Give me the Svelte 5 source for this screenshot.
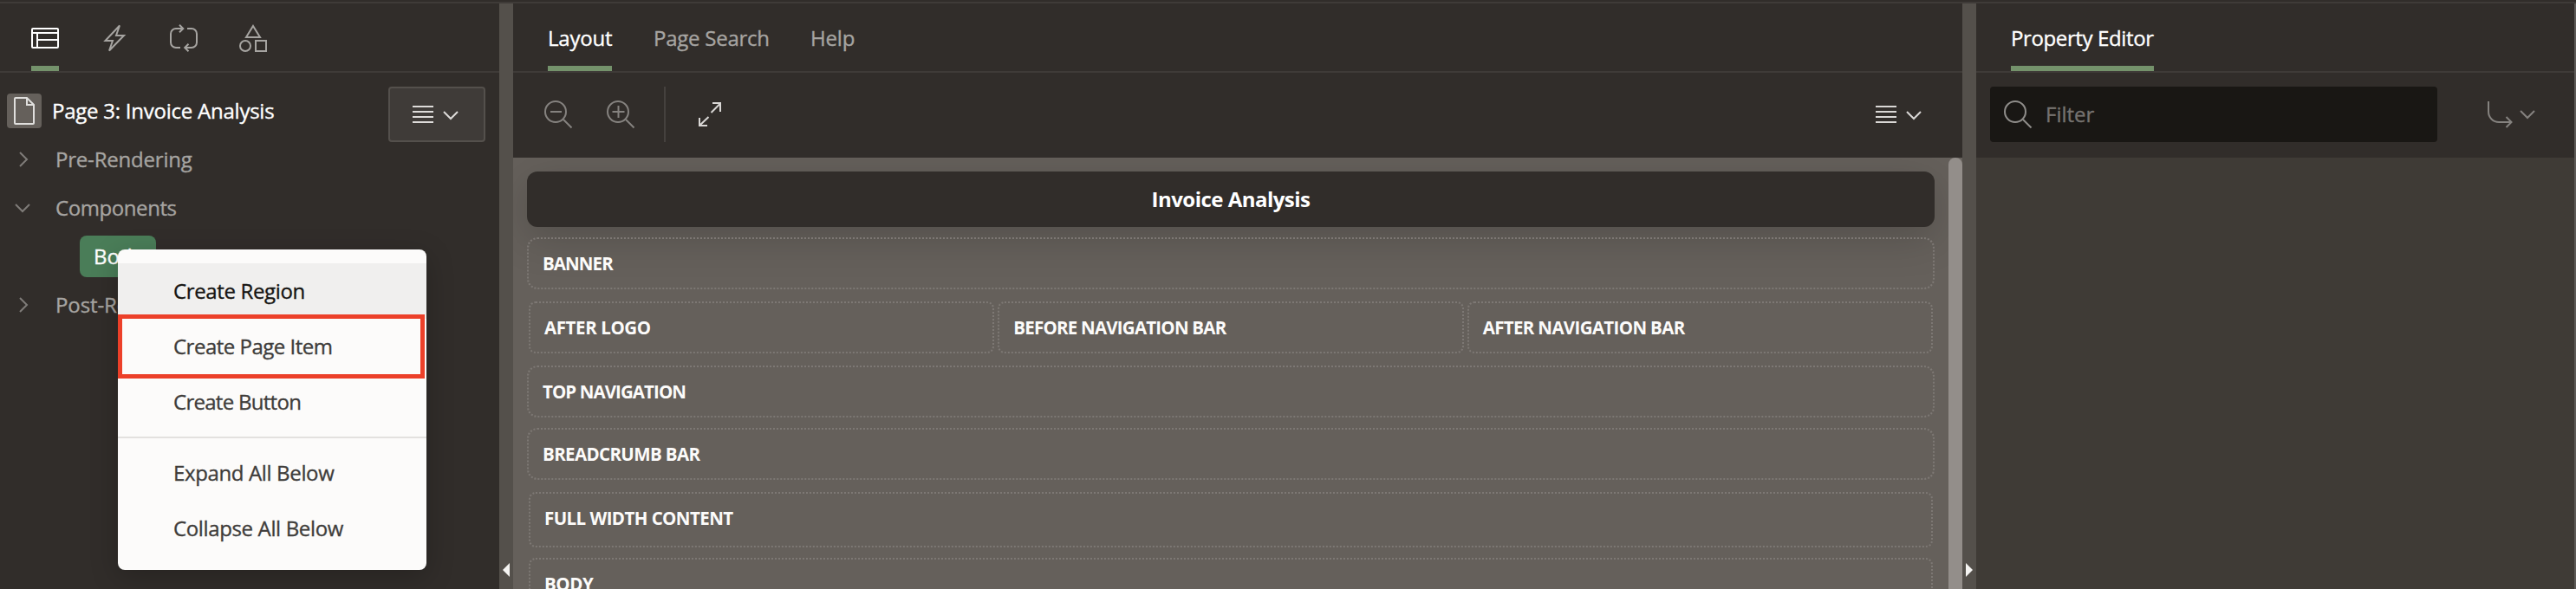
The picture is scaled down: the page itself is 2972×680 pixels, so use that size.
<script>
  const tree = [
    { label: 'Pre-Rendering', open: false, cls: 'pre' },
    { label: 'Components', open: true, cls: 'comp' },
    { label: 'Body', leaf: true, cls: 'body' },
    { label: 'Post-Rendering', open: false, cls: 'post' }
  ];
</script>

{#snippet chevron()}
  <svg class="chev" width="18" height="10" viewBox="0 0 18 10"><path d="M1 1l8 8 8-8" /></svg>
{/snippet}
{#snippet lines()}
  <svg width="24" height="20" viewBox="0 0 24 20"><path d="M0 1h24M0 7h24M0 13h24M0 19h24" /></svg>
{/snippet}

<main>
  <div class="topline"></div>
  <div class="panes">
    <section class="left">
      <nav class="tabs icons">
        <span class="tab on">
          <svg width="32" height="32" viewBox="0 0 32 32"><rect x="1" y="5" width="30" height="22" rx="1" /><path d="M1 10h30M7 10v17M7 18h24" /></svg>
        </span>
        <span class="tab bolt">
          <svg width="24" height="32" viewBox="0 0 24 32"><path d="M18 1.500L1.500 19H10L6 30.500 23 13h-9z" /></svg>
        </span>
        <span class="tab loop">
          <svg width="32" height="32" viewBox="0 0 32 32"><path d="M12 27H7a6 6 0 0 1-6-6V11a6 6 0 0 1 6-6h8M11 .700L15.300 5 11 9.300M20 5h5a6 6 0 0 1 6 6v10a6 6 0 0 1-6 6h-8M21.500 22.700L17.200 27l4.300 4.300" /></svg>
        </span>
        <span class="tab shapes">
          <svg width="32" height="32" viewBox="0 0 32 32"><path d="M16 2l8 13H8z" /><circle cx="7" cy="25" r="6" /><rect x="19" y="19" width="12" height="12" /></svg>
        </span>
      </nav>
      <div class="treehead">
        <span class="pageicon">
          <svg width="24" height="32" viewBox="0 0 24 32"><path d="M1 2a1 1 0 0 1 1-1h13l8 8v21a1 1 0 0 1-1 1H2a1 1 0 0 1-1-1zM15 1v8h8" /></svg>
        </span>
        <span class="pagename">Page 3: Invoice Analysis</span>
        <button class="menubtn">{@render lines()}{@render chevron()}</button>
      </div>
      <ul class="tree">
        {#each tree as n}
          <li class:leaf={n.leaf}>
            {#if n.leaf}
              <span class="pill">{n.label}</span>
            {:else}
              <span class="toggle" class:closed={!n.open}>{@render chevron()}</span>
              <span class={n.cls}>{n.label}</span>
            {/if}
          </li>
        {/each}
      </ul>
      <div class="menu">
        <div class="item active"><span>Create Region</span></div>
        <div class="item"><span class="t-item">Create Page Item</span></div>
        <div class="item"><span class="t-button">Create Button</span></div>
        <hr />
        <div class="item"><span>Expand All Below</span></div>
        <div class="item"><span>Collapse All Below</span></div>
        <div class="callout"></div>
      </div>
    </section>

    <div class="splitter"><svg width="8" height="16" viewBox="0 0 8 16"><path d="M8 0v16L0 8z" /></svg></div>

    <section class="middle">
      <nav class="tabs words">
        <span class="tab on w-layout">Layout</span>
        <span class="tab w-search">Page Search</span>
        <span class="tab w-help">Help</span>
      </nav>
      <div class="toolbar">
        <svg class="dim" width="32" height="32" viewBox="0 0 32 32"><circle cx="13" cy="13" r="12" /><path d="M22 22l9.500 9.500M7 13h13" /></svg>
        <svg class="dim zin" width="32" height="32" viewBox="0 0 32 32"><circle cx="13" cy="13" r="12" /><path d="M22 22l9.500 9.500M6.500 13h14M13.500 6v14" /></svg>
        <i class="sep"></i>
        <svg class="expand" width="26" height="28" viewBox="0 0 26 28"><path d="M14.500 12L25 1.500M16 1h9v10M11.500 17L1 27M1 18v9h9" /></svg>
        <span class="right">{@render lines()}{@render chevron()}</span>
      </div>
      <div class="canvas">
        <div class="scroll">
          <div class="title"><span>Invoice Analysis</span></div>
          <div class="slot"><span class="s-banner">BANNER</span></div>
          <div class="cols">
            <div class="slot in"><span class="s-al">AFTER LOGO</span></div>
            <div class="slot in"><span class="s-nav">BEFORE NAVIGATION BAR</span></div>
            <div class="slot in"><span class="s-an">AFTER NAVIGATION BAR</span></div>
          </div>
          <div class="slot"><span class="s-banner">TOP NAVIGATION</span></div>
          <div class="slot"><span class="s-bc">BREADCRUMB BAR</span></div>
          <div class="slot in full"><span class="s-fw">FULL WIDTH CONTENT</span></div>
          <div class="slot in bodyslot"><span class="s-al">BODY</span></div>
        </div>
        <div class="bar"></div>
      </div>
    </section>

    <div class="splitter"><svg width="8" height="16" viewBox="0 0 8 16"><path d="M0 0v16l8-8z" /></svg></div>

    <section class="props">
      <nav class="tabs words">
        <span class="tab on w-prop">Property Editor</span>
      </nav>
      <div class="toolbar">
        <div class="filter">
          <svg width="32" height="32" viewBox="0 0 32 32"><circle cx="13" cy="13" r="12" /><path d="M22 22l9.500 9.500" /></svg>
          <span>Filter</span>
        </div>
        <span class="goto">
          <svg width="28" height="30" viewBox="0 0 28 30"><path d="M1 0v12a12 12 0 0 0 12 12h14M21.500 18l6 6-6 6" /></svg>
          {@render chevron()}
        </span>
      </div>
    </section>
  </div>
</main>

<style>
  :global(body) { margin: 0; background: #312d2a; }
  main {
    box-sizing: border-box;
    width: 2972px;
    height: 680px;
    padding-top: 2px;
    overflow: hidden;
    background: #312d2a;
    color: #a6a4a1;
    font: 400 24px/32px "Open Sans", "Noto Sans", sans-serif;
    -webkit-text-stroke: .35px currentColor;
    white-space: nowrap;
  }
  svg { display: block; flex: none; fill: none; stroke: currentColor; stroke-width: 2; overflow: visible; }
  .topline { height: 2px; background: #3f3b38; }
  .panes { display: flex; height: 676px; }
  .left { position: relative; width: 576px; }
  .middle { display: flex; flex-direction: column; width: 1672px; }
  .props { box-sizing: border-box; flex: 1; background: #3f3b36; border-right: 2px solid #5d5a57; }
  .splitter { box-sizing: border-box; width: 16px; padding: 646px 4px 0; background: #54504b; }
  .splitter path { fill: #f5f4f2; stroke: none; }

  .tabs { box-sizing: border-box; display: flex; height: 80px; border-bottom: 2px solid #3f3b38; background: #312d2a; }
  .tab { box-sizing: border-box; height: 78px; border-bottom: 6px solid transparent; }
  .tab.on { color: #fff; border-color: #74926b; }
  .icons { padding-left: 36px; }
  .icons .tab { padding-top: 24px; }
  .bolt { margin-left: 52px; }
  .loop { margin-left: 52px; }
  .shapes { margin-left: 48px; }
  .words { padding-left: 40px; }
  .words .tab { padding-top: 24px; }
  .w-layout { width: 74px; letter-spacing: -.2px; }
  .w-search { margin-left: 48px; width: 134px; letter-spacing: -.25px; }
  .w-help { margin-left: 47px; letter-spacing: -.2px; }
  .w-prop { width: 165px; letter-spacing: -.38px; }

  .treehead { display: flex; padding: 16px 16px 0 8px; height: 56px; }
  .pageicon { display: flex; align-items: center; justify-content: center; width: 40px; height: 40px; margin-top: 8px; border-radius: 4px; background: #65605b; color: #e0dfdd; }
  .pagename { margin: 12px 0 0 12px; color: #fff; letter-spacing: -.24px; }
  .menubtn { box-sizing: border-box; display: flex; align-items: center; gap: 11px; width: 112px; height: 64px; margin: 0 0 0 auto; padding: 0 0 0 26px; border: 2px solid #54504c; border-radius: 4px; background: #3f3b38; color: #dddbd9; }
  .menubtn .chev, .right .chev { margin-top: 2px; }
  .tree { margin: 0; padding: 0; list-style: none; }
  .tree li { display: flex; align-items: center; height: 56px; }
  .toggle { display: flex; justify-content: center; width: 18px; margin: 0 29px 0 17px; color: #7f7c79; }
  .toggle.closed .chev { transform: translateX(1px) rotate(-90deg); }
  .pre { letter-spacing: -.2px; }
  .comp { letter-spacing: -.42px; }
  .post { letter-spacing: -.1px; }
  .tree .leaf { padding-left: 92px; }
  .pill { box-sizing: border-box; width: 88px; height: 48px; padding: 8px 0 0 16px; border-radius: 8px; background: #4a7d58; color: #fff; }

  .menu { position: absolute; left: 136px; top: 284px; box-sizing: border-box; width: 356px; height: 370px; padding: 16px 0; border-radius: 8px; background: #fcfbfa; color: #3f3d3b; box-shadow: 0 8px 32px rgba(0, 0, 0, .22); }
  .item { height: 64px; padding-left: 64px; line-height: 64px; letter-spacing: -.36px; }
  .t-item { letter-spacing: -.5px; }
  .t-button { letter-spacing: -.72px; }
  .active { background: #f0efee; color: #161513; }
  hr { height: 2px; margin: 8px 0; border: 0; background: #e3e1df; }
  .callout { position: absolute; left: 0; top: 75px; box-sizing: border-box; width: 354px; height: 74px; border: 5px solid #ec4029; }

  .toolbar { box-sizing: border-box; display: flex; align-items: center; flex: none; height: 98px; padding: 0 47px 2px 36px; background: #312d2a; color: #d9d7d5; }
  .dim { color: #85827f; }
  .zin { margin-left: 40px; }
  .sep { width: 2px; height: 64px; margin-left: 34px; background: #45413e; }
  .expand { margin-left: 38px; }
  .right { display: flex; align-items: center; gap: 11px; margin-left: auto; }

  .canvas { display: flex; flex: 1; min-height: 0; background: #65605b; overflow: hidden; }
  .scroll { flex: 1; padding: 16px 16px 0; }
  .bar { width: 16px; border-radius: 8px 8px 0 0; background: #938e8a; }
  .title { box-sizing: border-box; height: 64px; padding-top: 16px; border-radius: 12px; background: #312d2a; color: #fff; text-align: center; font-weight: 700; letter-spacing: -.52px; -webkit-text-stroke: 0; box-shadow: 0 12px 48px rgba(0, 0, 0, .18); }
  .slot { box-sizing: border-box; height: 60px; margin-top: 12px; padding: 12px 0 0 16px; border: 2px dotted #7d7874; border-radius: 12px; color: #fcfbfa; font-size: 20.500px; font-weight: 700; -webkit-text-stroke: 0; }
  .s-banner { letter-spacing: -.92px; }
  .s-al { letter-spacing: -.4px; }
  .s-nav { letter-spacing: -.78px; }
  .s-an { letter-spacing: -.65px; }
  .s-bc { letter-spacing: -.62px; }
  .s-fw { letter-spacing: -.57px; }
  .cols { display: grid; grid-template-columns: repeat(3, 1fr); gap: 4px; margin: 14px 2px; }
  .in { margin: 0; border-radius: 8px; }
  .full { height: 64px; margin: 14px 2px 12px; }
  .bodyslot { height: 64px; margin: 0 2px; }

  .props .toolbar { padding: 0 45px 2px 16px; }
  .filter { box-sizing: border-box; display: flex; align-items: center; gap: 16px; width: 516px; height: 64px; padding-left: 16px; border-radius: 4px; background: #191714; color: #75726f; }
  .filter svg { color: #8f8d8a; }
  .goto { display: flex; align-items: center; gap: 9px; margin-left: auto; color: #85827f; }
</style>
